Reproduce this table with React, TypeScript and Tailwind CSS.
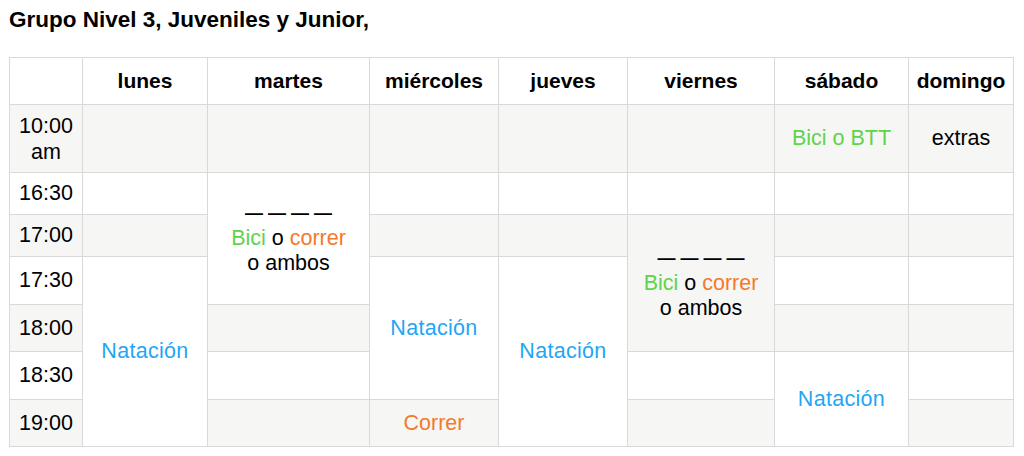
import React from 'react';

type Cell = {
  content?: React.ReactNode;
  span?: string;
  bg: string;
  bold?: boolean;
};

const W = 'bg-white';
const G = 'bg-[#f6f6f5]';

const Bici = () => <span className="text-[#5fd34b]">Bici</span>;
const Correr = ({ children }: { children: React.ReactNode }) => <span className="text-[#f5792c]">{children}</span>;
const Natacion = () => <span className="tracking-[0.3px] text-[#1fa6f4]">Natación</span>;

const BiciOCorrer = () => (
  <div className="flex flex-col items-center leading-[25px]">
    <span className="text-[18px] leading-[25px] font-bold">— — — —</span>
    <span>
      <Bici /> o <Correr>correr</Correr>
    </span>
    <span>o ambos</span>
  </div>
);

// listed row by row, cells already covered by a row-span are skipped
const cells: Cell[] = [
  { bg: W },
  { content: 'lunes', bg: W, bold: true },
  { content: 'martes', bg: W, bold: true },
  { content: 'miércoles', bg: W, bold: true },
  { content: 'jueves', bg: W, bold: true },
  { content: 'viernes', bg: W, bold: true },
  { content: 'sábado', bg: W, bold: true },
  { content: 'domingo', bg: W, bold: true },

  {
    content: (
      <div className="flex flex-col items-center leading-[26px]">
        <span>10:00</span>
        <span>am</span>
      </div>
    ),
    bg: G,
  },
  { bg: G },
  { bg: G },
  { bg: G },
  { bg: G },
  { bg: G },
  { content: <span className="text-[#5fd34b]">Bici o BTT</span>, bg: G },
  { content: 'extras', bg: G },

  { content: '16:30', bg: W },
  { bg: W },
  { content: <BiciOCorrer />, bg: W, span: 'row-span-3' },
  { bg: W },
  { bg: W },
  { bg: W },
  { bg: W },
  { bg: W },

  { content: '17:00', bg: G },
  { bg: G },
  { bg: G },
  { bg: G },
  { content: <BiciOCorrer />, bg: G, span: 'row-span-3' },
  { bg: G },
  { bg: G },

  { content: '17:30', bg: W },
  { content: <Natacion />, bg: W, span: 'row-span-4' },
  { content: <Natacion />, bg: W, span: 'row-span-3' },
  { content: <Natacion />, bg: W, span: 'row-span-4' },
  { bg: W },
  { bg: W },

  { content: '18:00', bg: G },
  { bg: G },
  { bg: G },
  { bg: G },

  { content: '18:30', bg: W },
  { bg: W },
  { bg: W },
  { content: <Natacion />, bg: W, span: 'row-span-2' },
  { bg: W },

  { content: '19:00', bg: G },
  { bg: G },
  { content: <Correr>Correr</Correr>, bg: G },
  { bg: G },
  { bg: G },
];

export default function App() {
  return (
    <div className="min-h-[456px] bg-white px-[9px] pt-[7px] text-black font-['Liberation_Sans',Arial,sans-serif]">
      <h1 className="text-[22.5px] leading-[26px] font-bold">Grupo Nivel 3, Juveniles y Junior,</h1>

      <div className="mt-[24px] grid w-fit grid-cols-[72px_124px_161px_128px_128px_146px_133px_104px] grid-rows-[46px_67px_41px_41px_47px_46px_47px_46px] gap-px border border-[#d9d9d9] bg-[#d9d9d9]">
        {cells.map((cell, i) => (
          <div
            key={i}
            className={`flex items-center justify-center text-center ${cell.bg} ${cell.span ?? ''} ${
              cell.bold ? 'text-[21px] font-bold' : 'text-[21.5px]'
            }`}
          >
            {cell.content}
          </div>
        ))}
      </div>
    </div>
  );
}
